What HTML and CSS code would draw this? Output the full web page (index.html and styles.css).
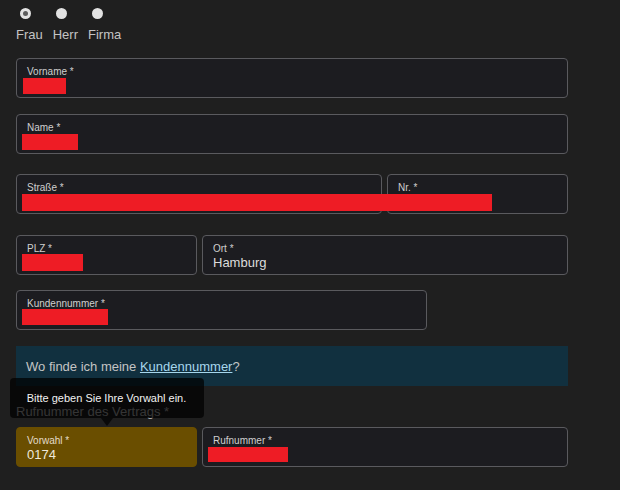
FILE: index.html
```html
<!DOCTYPE html>
<html lang="de">
<head>
<meta charset="utf-8">
<title>Formular</title>
<link rel="stylesheet" href="styles.css">
</head>
<body>
<form class="form">
  <div class="salutation">
    <label class="opt"><span class="radio checked"></span><span class="opt-text">Frau</span></label>
    <label class="opt"><span class="radio"></span><span class="opt-text">Herr</span></label>
    <label class="opt"><span class="radio"></span><span class="opt-text">Firma</span></label>
  </div>

  <div class="field gap-16"><span class="label">Vorname *</span><span class="value"><span class="redact r-vorname"></span></span></div>
  <div class="field gap-20"><span class="label">Name *</span><span class="value"><span class="redact r-name"></span></span></div>

  <div class="row row-wide-first gap-21">
    <div class="field"><span class="label">Straße *</span><span class="value"><span class="redact r-strasse"></span></span></div>
    <div class="field"><span class="label">Nr. *</span><span class="value"></span></div>
  </div>

  <div class="row row-narrow-first gap-15">
    <div class="field"><span class="label">PLZ *</span><span class="value"><span class="redact r-plz"></span></span></div>
    <div class="field"><span class="label">Ort *</span><span class="value">Hamburg</span></div>
  </div>

  <div class="field field-kunde gap-16"><span class="label">Kundennummer *</span><span class="value"><span class="redact r-kunde"></span></span></div>

  <div class="info">Wo finde ich meine&nbsp;<a class="info-link" href="#">Kundennummer</a>?</div>

  <div class="section-title">Rufnummer des Vertrags *</div>

  <div class="row row-narrow-first">
    <div class="field field-active">
      <span class="label">Vorwahl *</span><span class="value">0174</span>
      <div class="tooltip">Bitte geben Sie Ihre Vorwahl ein.</div>
    </div>
    <div class="field"><span class="label">Rufnummer *</span><span class="value"><span class="redact r-ruf"></span></span></div>
  </div>
</form>
</body>
</html>
```

FILE: styles.css
```css
* { box-sizing: border-box; }

html, body {
  margin: 0;
  background: #1f1f1f;
}

body {
  font-family: "Liberation Sans", Arial, sans-serif;
  color: #c8c8c8;
}

.form {
  width: 568px;
  padding: 8px 0 0 16px;
}

/* salutation radios */
.salutation {
  display: flex;
  gap: 10px;
  margin-bottom: 15.5px;
}

.opt {
  display: flex;
  flex-direction: column;
  align-items: flex-start;
}

.radio {
  width: 11px;
  height: 11px;
  margin-left: 3.5px;
  border-radius: 50%;
  background: #e2e2e2;
  display: flex;
  align-items: center;
  justify-content: center;
}

.radio.checked::after {
  content: "";
  width: 5px;
  height: 5px;
  border-radius: 50%;
  background: #5c5c5c;
}

.opt-text {
  margin-top: 7.5px;
  font-size: 13px;
  line-height: 16px;
  color: #c4c4c4;
}

/* fields */
.field {
  position: relative;
  height: 40px;
  border: 1px solid #5a5a5e;
  border-radius: 4px;
  background: #1c1c20;
  padding: 7px 10px 0;
}

.label {
  display: block;
  font-size: 10px;
  line-height: 12px;
  color: #cfcfcf;
  white-space: nowrap;
}

.value {
  display: block;
  height: 16px;
  font-size: 13px;
  line-height: 16px;
  color: #dcdcdc;
  white-space: nowrap;
}

.redact {
  position: relative;
  z-index: 1;
  display: block;
  height: 16px;
  margin-left: -5px;
  background: #ee1c25;
}

.r-vorname { width: 43px; margin-left: -4px; }
.r-name { width: 56px; }
.r-strasse { width: 470px; height: 17px; }
.r-plz { width: 61px; height: 17px; margin-top: -1px; }
.r-kunde { width: 86px; margin-top: -1px; }
.r-ruf { width: 80px; margin-left: -5.5px; height: 15px; }

.gap-15 { margin-bottom: 15px; }
.gap-16 { margin-bottom: 16px; }
.gap-20 { margin-bottom: 20px; }
.gap-21 { margin-bottom: 21px; }

.row {
  display: grid;
  gap: 5px;
}

.row-wide-first { grid-template-columns: 366px 181px; }
.row-narrow-first { grid-template-columns: 181px 366px; }

.field-kunde { width: 411px; }

/* info box */
.info {
  display: flex;
  align-items: center;
  height: 40px;
  padding: 0 10px;
  background: #11303f;
  font-size: 13px;
  color: #c4c4c4;
}

.info-link {
  color: #a6d6ec;
  text-decoration: underline;
}

.section-title {
  margin-top: 17.5px;
  margin-bottom: 7.5px;
  font-size: 13px;
  line-height: 16px;
  color: #bdbdbd;
}

/* active Vorwahl field */
.field-active {
  background: #6a4e00;
  border-color: #6a4e00;
}

.field-active .label { color: #e4dcc8; }
.field-active .value { color: #efe9dc; }

/* tooltip */
.tooltip {
  position: absolute;
  bottom: 48px;
  left: 50%;
  transform: translateX(-50%);
  width: 194px;
  height: 40px;
  border-radius: 4px;
  background: rgba(0, 0, 0, 0.72);
  color: #f2f2f2;
  font-size: 11px;
  display: flex;
  align-items: center;
  justify-content: center;
  white-space: nowrap;
}

.tooltip::after {
  content: "";
  position: absolute;
  top: 100%;
  left: 50%;
  transform: translateX(-50%);
  border-top: 8px solid #090909;
  border-left: 6.5px solid transparent;
  border-right: 6.5px solid transparent;
}
```
